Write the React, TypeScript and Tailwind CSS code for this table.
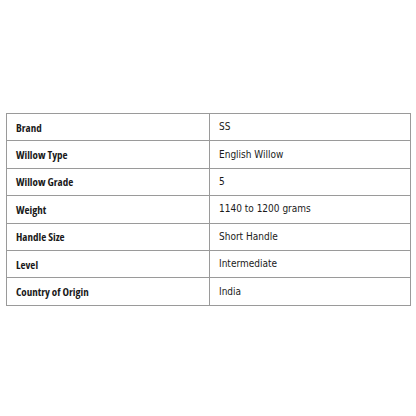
const rows: [string, string][] = [
  ['Brand', 'SS'],
  ['Willow Type', 'English Willow'],
  ['Willow Grade', '5'],
  ['Weight', '1140 to 1200 grams'],
  ['Handle Size', 'Short Handle'],
  ['Level', 'Intermediate'],
  ['Country of Origin', 'India'],
];

export default function App() {
  return (
    <div className="w-[416px] h-[416px] bg-white pt-[113px] pl-[6px]">
      <table className="w-[405px] border-collapse border border-[#9a9a9a] text-[#1a1a1a]">
        <tbody>
          {rows.map(([label, value]) => (
            <tr key={label} className="h-[27.4px]">
              <td className="w-[203px] border border-[#9a9a9a] pl-[9px] text-[11px] font-bold font-['Open_Sans'] [font-stretch:condensed] leading-none">
                {label}
              </td>
              <td className="border border-[#9a9a9a] pl-[9px] text-[10px] font-['DejaVu_Sans'] [font-stretch:condensed] leading-none">
                {value}
              </td>
            </tr>
          ))}
        </tbody>
      </table>
    </div>
  );
}
